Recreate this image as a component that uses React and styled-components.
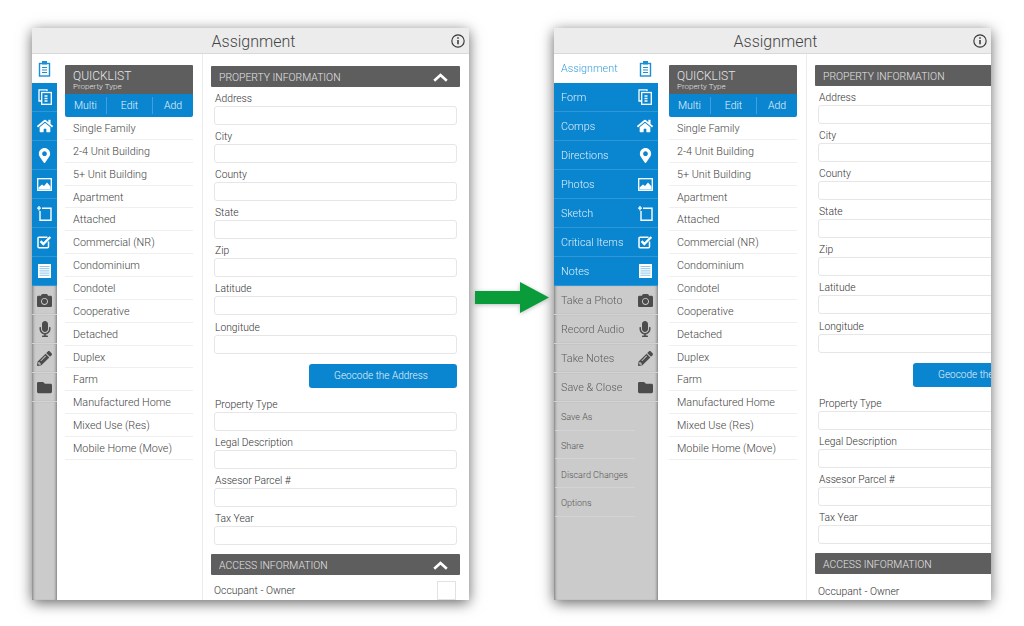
import React from "react";
import styled, { createGlobalStyle } from "styled-components";
import { FaHome, FaMapMarkerAlt, FaCamera, FaMicrophone, FaPencilAlt, FaFolder } from "react-icons/fa";

const ClipboardIcon = () => (
	<svg width="13" height="16" viewBox="0 0 13 16" fill="none" stroke="currentColor">
		<rect x="1.5" y="2.5" width="10" height="12.5" strokeWidth="1.4" />
		<rect x="4.5" y="0.5" width="4" height="2.5" fill="currentColor" strokeWidth="1" />
		<path d="M4 6.5h5M4 9h5M4 11.5h5" strokeWidth="1.2" />
	</svg>
);
const FormIcon = () => (
	<svg width="14" height="16" viewBox="0 0 14 16" fill="none" stroke="currentColor">
		<path d="M9 2V0.8H1V12h2" strokeWidth="1.3" />
		<rect x="3.7" y="3.5" width="9.6" height="11.8" strokeWidth="1.3" />
		<path d="M6.5 7h3M6.5 9.5h3M6.5 12h3" strokeWidth="1.4" />
	</svg>
);
const ImageIcon = () => (
	<svg width="15" height="13" viewBox="0 0 15 13" fill="none" stroke="currentColor">
		<rect x="0.7" y="0.7" width="13.6" height="11.6" strokeWidth="1.3" />
		<path d="M1.5 11.5V9.5L5 6.5l2 1.5 3-3.5 3.5 4v3z" fill="currentColor" stroke="none" />
	</svg>
);
const SketchIcon = () => (
	<svg width="15" height="15" viewBox="0 0 15 15" fill="none" stroke="currentColor">
		<path d="M5 2.2h9v12H3V5" strokeWidth="1.4" />
		<path d="M2 0v4.4M0 2.2h4" strokeWidth="1.3" />
	</svg>
);
const CheckIcon = () => (
	<svg width="15" height="14" viewBox="0 0 15 14" fill="none" stroke="currentColor">
		<path d="M11.5 6.5v5.2a1 1 0 0 1-1 1H2a1 1 0 0 1-1-1V3.2a1 1 0 0 1 1-1h8.5" strokeWidth="1.5" />
		<path d="M3.6 6.2l2.7 2.8L13.3 2" strokeWidth="2.4" />
	</svg>
);
const NotesIcon = () => (
	<svg width="13" height="14" viewBox="0 0 13 14">
		<rect width="13" height="14" fill="currentColor" />
		<path d="M1.5 2.5h10M1.5 4.7h10M1.5 6.9h10M1.5 9.1h10M1.5 11.3h10" stroke="#7cbde6" strokeWidth="0.9" />
	</svg>
);
const InfoIcon = () => (
	<svg width="14" height="14" viewBox="0 0 15 15" fill="none" stroke="#333">
		<circle cx="7.5" cy="7.5" r="6.6" strokeWidth="1.2" />
		<path d="M7.5 6.5v4.6" strokeWidth="1.6" />
		<path d="M7.5 3.6v1.6" strokeWidth="1.6" />
	</svg>
);
const Chevron = () => (
	<svg width="15" height="9" viewBox="0 0 15 9" fill="none" stroke="#fff" strokeWidth="2.6">
		<path d="M1.2 7.8L7.5 2l6.3 5.8" />
	</svg>
);

const navItems = [
	{ label: "Assignment", Icon: ClipboardIcon, tone: "active" },
	{ label: "Form", Icon: FormIcon, tone: "blue" },
	{ label: "Comps", Icon: FaHome, tone: "blue", size: 16 },
	{ label: "Directions", Icon: FaMapMarkerAlt, tone: "blue", size: 15 },
	{ label: "Photos", Icon: ImageIcon, tone: "blue" },
	{ label: "Sketch", Icon: SketchIcon, tone: "blue" },
	{ label: "Critical Items", Icon: CheckIcon, tone: "blue" },
	{ label: "Notes", Icon: NotesIcon, tone: "blue" },
	{ label: "Take a Photo", Icon: FaCamera, tone: "gray", size: 15 },
	{ label: "Record Audio", Icon: FaMicrophone, tone: "gray", size: 16 },
	{ label: "Take Notes", Icon: FaPencilAlt, tone: "gray", size: 15 },
	{ label: "Save & Close", Icon: FaFolder, tone: "gray", size: 15 },
];
const extraItems = ["Save As", "Share", "Discard Changes", "Options"];

const listItems = [
	"Single Family",
	"2-4 Unit Building",
	"5+ Unit Building",
	"Apartment",
	"Attached",
	"Commercial (NR)",
	"Condominium",
	"Condotel",
	"Cooperative",
	"Detached",
	"Duplex",
	"Farm",
	"Manufactured Home",
	"Mixed Use (Res)",
	"Mobile Home (Move)",
];

const firstFields = ["Address", "City", "County", "State", "Zip", "Latitude", "Longitude"];
const secondFields = ["Property Type", "Legal Description", "Assesor Parcel #", "Tax Year"];

function Tablet({ expanded }) {
	return (
		<TabletFrame>
			<TopBar>
				Assignment
				<InfoButton>
					<InfoIcon />
				</InfoButton>
			</TopBar>
			<Body>
				<Sidebar $expanded={expanded}>
					{navItems.map(({ label, Icon, tone, size }) => (
						<NavItem key={label} $tone={tone} $expanded={expanded}>
							{expanded && <NavLabel>{label}</NavLabel>}
							<NavIcon $expanded={expanded}>
								<Icon size={size} />
							</NavIcon>
						</NavItem>
					))}
					<GrayFill>
						{expanded &&
							extraItems.map((label) => <ExtraItem key={label}>{label}</ExtraItem>)}
					</GrayFill>
				</Sidebar>
				<QuickColumn $expanded={expanded}>
					<QuickHead>
						<QuickTitle>QUICKLIST</QuickTitle>
						<QuickSub>Property Type</QuickSub>
					</QuickHead>
					<QuickActions>
						<QuickAction>Multi</QuickAction>
						<QuickAction>Edit</QuickAction>
						<QuickAction>Add</QuickAction>
					</QuickActions>
					{listItems.map((item) => (
						<ListRow key={item}>{item}</ListRow>
					))}
				</QuickColumn>
				<FormColumn $expanded={expanded}>
					<SectionBar>
						PROPERTY INFORMATION
						{!expanded && <Chevron />}
					</SectionBar>
					{firstFields.map((name) => (
						<Field key={name}>
							<FieldLabel>{name}</FieldLabel>
							<FieldInput />
						</Field>
					))}
					<GeocodeButton>Geocode the Address</GeocodeButton>
					{secondFields.map((name) => (
						<Field key={name}>
							<FieldLabel>{name}</FieldLabel>
							<FieldInput />
						</Field>
					))}
					<SectionBar $access>
						ACCESS INFORMATION
						{!expanded && <Chevron />}
					</SectionBar>
					<OccupantRow $expanded={expanded}>
						Occupant - Owner
						<CheckBox />
					</OccupantRow>
				</FormColumn>
			</Body>
		</TabletFrame>
	);
}

export default function App() {
	return (
		<Page>
			<GlobalStyle />
			<Tablet />
			<ArrowSlot>
				<svg width="74" height="31" viewBox="0 0 74 31">
					<path d="M0 9h45V0l29 15.5L45 31v-9H0z" fill="#0a9b3a" />
				</svg>
			</ArrowSlot>
			<Tablet expanded />
		</Page>
	);
}

const GlobalStyle = createGlobalStyle`
	html, body {
		margin: 0;
		background: #fff;
	}
	* {
		box-sizing: border-box;
	}
`;

const Page = styled.div`
	width: 1024px;
	height: 626px;
	display: flex;
	align-items: flex-start;
	padding: 28px 33px 26px 32px;
	font-family: Roboto, "Liberation Sans", sans-serif;
	font-weight: 300;
	overflow: hidden;
`;

const ArrowSlot = styled.div`
	width: 85px;
	flex: none;
	display: flex;
	justify-content: center;
	padding-top: 254px;
	svg {
		display: block;
		filter: drop-shadow(0 1px 2px rgba(0, 0, 0, 0.25));
	}
`;

const TabletFrame = styled.div`
	width: 437px;
	height: 572px;
	flex: none;
	display: flex;
	flex-direction: column;
	background: #fff;
	overflow: hidden;
	box-shadow: 0 3px 13px rgba(0, 0, 0, 0.6);
`;

const TopBar = styled.div`
	position: relative;
	height: 26px;
	flex: none;
	display: flex;
	align-items: center;
	justify-content: center;
	padding: 1px 0 0 6px;
	background: #ececec;
	border-bottom: 1px solid #d9d9d9;
	font-size: 16px;
	color: #444;
`;

const InfoButton = styled.div`
	position: absolute;
	right: 4px;
	top: 6px;
	height: 14px;
	svg {
		display: block;
	}
`;

const Body = styled.div`
	flex: 1;
	min-height: 0;
	display: flex;
	align-items: stretch;
`;

const Sidebar = styled.div`
	width: ${(p) => (p.$expanded ? "104px" : "25px")};
	flex: none;
	display: flex;
	flex-direction: column;
`;

const toneStyles = {
	active: "background: #fff; color: #1b8fd6;",
	blue: "background: #0a85cf; color: #fff; border-bottom: 1px solid #2d97d8;",
	gray: `background: #cbcbcb; color: #4c4c4c; border-bottom: 1px solid #d3d3d3;
		box-shadow: inset 3px 0 3px -2px rgba(0, 0, 0, 0.4), inset -3px 0 3px -2px rgba(0, 0, 0, 0.4);`,
};

const NavItem = styled.div`
	height: 29px;
	flex: none;
	display: flex;
	align-items: center;
	justify-content: ${(p) => (p.$expanded ? "space-between" : "center")};
	padding: ${(p) => (p.$expanded ? "0 5px 0 7px" : "0")};
	font-size: 10.8px;
	${(p) => toneStyles[p.$tone]}
`;

const NavLabel = styled.span`
	white-space: nowrap;
	opacity: 0.88;
`;

const NavIcon = styled.span`
	width: 16px;
	display: flex;
	justify-content: center;
	flex: none;
	svg {
		display: block;
	}
`;

const GrayFill = styled.div`
	flex: 1;
	background: #cbcbcb;
	box-shadow: inset 3px 0 3px -2px rgba(0, 0, 0, 0.4), inset -3px 0 3px -2px rgba(0, 0, 0, 0.4);
`;

const ExtraItem = styled.div`
	width: 80px;
	height: 28.7px;
	display: flex;
	align-items: center;
	padding: 3px 0 0 6px;
	margin-left: 1px;
	border-bottom: 1px solid #d3d3d3;
	font-size: 9px;
	color: #555;
	white-space: nowrap;
`;

const QuickColumn = styled.div`
	width: 128px;
	flex: none;
	margin-top: 11px;
	margin-left: ${(p) => (p.$expanded ? "11px" : "8px")};
`;

const QuickHead = styled.div`
	height: 29px;
	padding: 5px 8px 0;
	background: #5e5e5e;
	color: #e4e4e4;
	border-radius: 1px 1px 0 0;
`;

const QuickTitle = styled.div`
	font-size: 12px;
	line-height: 13px;
`;

const QuickSub = styled.div`
	font-size: 8px;
	line-height: 8px;
`;

const QuickActions = styled.div`
	height: 23px;
	display: grid;
	grid-template-columns: 42px 46px 40px;
	align-items: center;
	background: #0a85cf;
	border-radius: 0 0 2px 2px;
`;

const QuickAction = styled.div`
	height: 17px;
	display: flex;
	align-items: center;
	justify-content: center;
	font-size: 10.5px;
	color: #e8f4fb;
	border-right: 1px solid #3ea0dc;
	&:last-child {
		border-right: none;
	}
`;

const ListRow = styled.div`
	height: 22.87px;
	display: flex;
	align-items: center;
	padding: 1px 0 0 8px;
	border-bottom: 1px solid #efefef;
	font-size: 10.8px;
	color: #444;
	white-space: nowrap;
`;

const FormColumn = styled.div`
	width: 258px;
	flex: none;
	margin-left: 9px;
	padding: ${(p) => (p.$expanded ? "11px" : "12px")} 0 0 8px;
	border-left: 1px solid #ececec;
`;

const SectionBar = styled.div`
	width: 249px;
	height: 21px;
	display: flex;
	align-items: center;
	justify-content: space-between;
	padding: 1px 12px 0 8px;
	margin-top: ${(p) => (p.$access ? "9px" : "0")};
	background: #5e5e5e;
	border-radius: 1px;
	font-size: 10.4px;
	color: #e4e4e4;
	svg {
		display: block;
	}
`;

const Field = styled.div`
	width: 243px;
	height: 38.1px;
	margin-left: 3px;
`;

const FieldLabel = styled.div`
	height: 19px;
	padding: 5px 0 0 1px;
	font-size: 10.3px;
	line-height: 13px;
	color: #333;
`;

const FieldInput = styled.div`
	height: 19px;
	background: #fff;
	border: 1px solid #e6e6e6;
	border-radius: 3px;
`;

const GeocodeButton = styled.div`
	width: 148px;
	height: 24px;
	margin: 10px 0 5px 98px;
	padding-right: 4px;
	display: flex;
	align-items: center;
	justify-content: center;
	background: #0a85cf;
	border-radius: 3px;
	font-size: 10px;
	color: #e8f4fb;
	white-space: nowrap;
`;

const OccupantRow = styled.div`
	width: 243px;
	height: 26px;
	margin-left: 3px;
	padding: 6px 1px 0 0;
	display: flex;
	align-items: flex-start;
	justify-content: space-between;
	font-size: 10.4px;
	line-height: ${(p) => (p.$expanded ? "24px" : "20px")};
	color: #333;
`;

const CheckBox = styled.div`
	width: 19px;
	height: 19px;
	background: #fff;
	border: 1px solid #e2e2e2;
`;
